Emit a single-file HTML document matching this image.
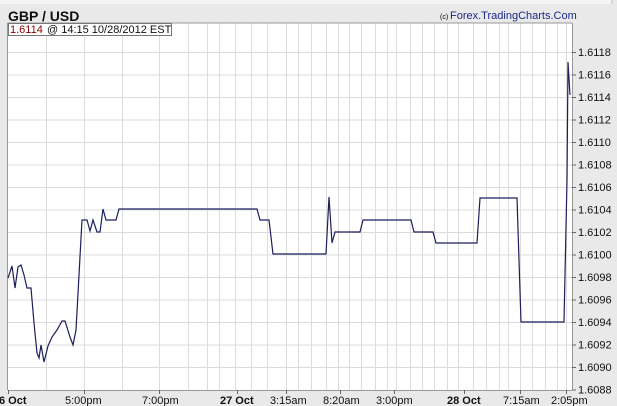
<!DOCTYPE html>
<html><head><style>
html,body{margin:0;padding:0;background:#e9e9e9;}
svg{display:block;font-family:"Liberation Sans",sans-serif;}
</style></head><body>
<svg width="617" height="406" viewBox="0 0 617 406" xmlns="http://www.w3.org/2000/svg">
<rect x="0" y="0" width="617" height="406" fill="#e9e9e9"/>
<rect x="0" y="0" width="612" height="4" fill="#f4f4f4"/>
<line x1="612" y1="0" x2="612" y2="4" stroke="#bbb"/>
<text x="8" y="21" font-size="14" font-weight="bold" fill="#111">GBP / USD</text>
<text x="440" y="19" font-size="7" fill="#000">(c)</text>
<text x="450" y="19" font-size="11" fill="#1a2a88">Forex.TradingCharts.Com</text>
<rect x="8" y="23" width="564" height="367" fill="#fff"/>
<g stroke="#dcdcdc" stroke-width="1">
<line x1="8" y1="52.5" x2="572" y2="52.5"/><line x1="8" y1="75" x2="572" y2="75"/><line x1="8" y1="97.5" x2="572" y2="97.5"/><line x1="8" y1="120" x2="572" y2="120"/><line x1="8" y1="142.5" x2="572" y2="142.5"/><line x1="8" y1="165" x2="572" y2="165"/><line x1="8" y1="187.5" x2="572" y2="187.5"/><line x1="8" y1="210" x2="572" y2="210"/><line x1="8" y1="232.5" x2="572" y2="232.5"/><line x1="8" y1="255" x2="572" y2="255"/><line x1="8" y1="277.5" x2="572" y2="277.5"/><line x1="8" y1="300" x2="572" y2="300"/><line x1="8" y1="322.5" x2="572" y2="322.5"/><line x1="8" y1="345" x2="572" y2="345"/><line x1="8" y1="367.5" x2="572" y2="367.5"/>
<path d="M46.5 23V390M84.5 23V390M122.5 23V390M159.5 23V390M188.5 23V390M207.5 23V390M219.5 23V390M235.5 23V390M251.5 23V390M267.5 23V390M286.5 23V390M298.5 23V390M311.5 23V390M326.5 23V390M338.5 23V390M349.5 23V390M361.5 23V390M375.5 23V390M387.5 23V390M396.5 23V390M410.5 23V390M422.5 23V390M434.5 23V390M447.5 23V390M458.5 23V390M473.5 23V390M486.5 23V390M499.5 23V390M508.5 23V390M520.5 23V390M532.5 23V390M545.5 23V390M557.5 23V390M566.5 23V390"/>
</g>
<path d="M7.5 23V390M572.5 23V390M7.5 23H572" stroke="#999" fill="none"/>
<line x1="8" y1="390.5" x2="572" y2="390.5" stroke="#999"/>
<g stroke="#666"><path d="M572 52.5h4M572 75h4M572 97.5h4M572 120h4M572 142.5h4M572 165h4M572 187.5h4M572 210h4M572 232.5h4M572 255h4M572 277.5h4M572 300h4M572 322.5h4M572 345h4M572 367.5h4M572 390h4"/>
<path d="M8.5 390v4M84.5 390v4M159.5 390v4M237.5 390v4M286.5 390v4M340.5 390v4M394.5 390v4M464.5 390v4M520.5 390v4M566.5 390v4"/></g>
<polyline fill="none" stroke="#1c1f5c" stroke-width="1.2" points="8,278 12,266 15,288 18,267 21,265 24,275 27,288 31,288 34,323 37,353 39,358 41,345 44,362 48,346 52,337 57,330 62,321 65,321 70,337 73,345 76,330 82,220 87,220 90,231 93,220 97,232 100,232 103,209 106,220 116,220 119,209 257,209 260,220 269,220 273,254 326,254 329,197 332,243 335,232 360,232 363,220 411,220 414,232 433,232 436,243 477,243 480,198 517,198 521,322 564,322 567,180 568,62 570,95"/>
<rect x="8.5" y="23.5" width="163" height="12" fill="#fff" stroke="#777"/>
<text x="10" y="33" font-size="11" fill="#8b0000">1.6114</text>
<text x="47" y="33" font-size="11" fill="#111">@ 14:15  10/28/2012 EST</text>
<g font-size="11" fill="#111">
<text x="578" y="56">1.6118</text><text x="578" y="78.5">1.6116</text><text x="578" y="101">1.6114</text><text x="578" y="123.5">1.6112</text><text x="578" y="146">1.6110</text><text x="578" y="168.5">1.6108</text><text x="578" y="191">1.6106</text><text x="578" y="213.5">1.6104</text><text x="578" y="236">1.6102</text><text x="578" y="258.5">1.6100</text><text x="578" y="281">1.6098</text><text x="578" y="303.5">1.6096</text><text x="578" y="326">1.6094</text><text x="578" y="348.5">1.6092</text><text x="578" y="371">1.6090</text><text x="578" y="393.5">1.6088</text>
</g>
<g font-size="11" fill="#111">
<text x="-1" y="404" font-weight="bold">6 Oct</text>
<text x="65" y="404">5:00pm</text>
<text x="142" y="404">7:00pm</text>
<text x="220" y="404" font-weight="bold">27 Oct</text>
<text x="270" y="404">3:15am</text>
<text x="323" y="404">8:20am</text>
<text x="376" y="404">3:00pm</text>
<text x="447" y="404" font-weight="bold">28 Oct</text>
<text x="503" y="404">7:15am</text>
<text x="551" y="404">2:05pm</text>
</g>
</svg>
</body></html>
